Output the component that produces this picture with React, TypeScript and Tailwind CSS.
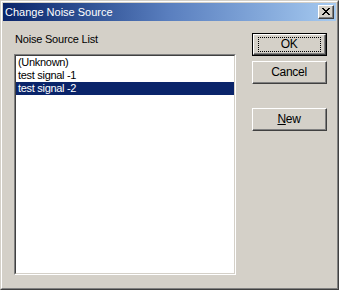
const font = { fontFamily: '"Liberation Sans", Arial, sans-serif' }

function Button({
  children,
  isDefault = false,
}: {
  children: React.ReactNode
  isDefault?: boolean
}) {
  const face = (
    <div className="flex h-full w-full border-t border-l border-t-white border-l-white border-r border-b border-r-[#404040] border-b-[#404040]">
      <div className="flex h-full w-full items-center justify-center border-r border-b border-r-[#808080] border-b-[#808080]">
        {isDefault ? (
          <div className="flex h-[15px] w-[63px] items-center justify-center border border-dotted border-black">
            {children}
          </div>
        ) : (
          children
        )}
      </div>
    </div>
  )
  return (
    <div
      className={
        isDefault
          ? 'h-[23px] w-[75px] border border-black text-[12px] tracking-[-0.3px] text-black'
          : 'h-[23px] w-[75px] text-[12px] tracking-[-0.3px] text-black'
      }
    >
      {face}
    </div>
  )
}

export default function App() {
  const items = ['(Unknown)', 'test signal -1', 'test signal -2']
  const selected = 2

  return (
    <div
      className="h-[290px] w-[339px] overflow-hidden border-t border-l border-t-[#d4d0c8] border-l-[#d4d0c8] border-r border-b border-r-[#404040] border-b-[#404040] bg-[#d4d0c8]"
      style={font}
    >
      <div className="flex h-full w-full flex-col border-t border-l border-t-white border-l-white border-r border-b border-r-[#808080] border-b-[#808080] p-px">
        {/* title bar */}
        <div className="flex h-[18px] items-center justify-between bg-gradient-to-r from-[#0a246a] via-[#5a7fbf] to-[#a6caf0] pl-[2px] pr-[2px]">
          <span className="text-[11px] leading-none text-white">Change Noise Source</span>
          <div className="h-[14px] w-[16px] border-t border-l border-t-white border-l-white border-r border-b border-r-[#404040] border-b-[#404040] bg-[#d4d0c8]">
            <div className="flex h-full w-full items-center justify-center border-r border-b border-r-[#808080] border-b-[#808080]">
              <svg width="8" height="7" viewBox="0 0 8 7" shapeRendering="crispEdges">
                <path
                  d="M0 0h2v1H0zM6 0h2v1H6zM1 1h2v1H1zM5 1h2v1H5zM2 2h4v1H2zM3 3h2v1H3zM2 4h4v1H2zM1 5h2v1H1zM5 5h2v1H5zM0 6h2v1H0zM6 6h2v1H6z"
                  fill="#000"
                />
              </svg>
            </div>
          </div>
        </div>

        {/* body */}
        <div className="flex flex-1 pl-[11px] pt-[10px]">
          <div className="flex w-[222px] flex-col">
            <div className="pl-px pt-[2px] text-[11px] leading-[13px] tracking-[-0.2px] text-black">
              Noise Source List
            </div>
            <div className="mt-[8px] h-[221px] border-t border-l border-t-[#808080] border-l-[#808080] border-r border-b border-r-white border-b-white">
              <div className="h-full w-full border-t border-l border-t-[#404040] border-l-[#404040] border-r border-b border-r-[#d4d0c8] border-b-[#d4d0c8] bg-white">
                {items.map((item, i) => (
                  <div
                    key={item}
                    className={
                      i === selected
                        ? 'h-[13px] bg-[#0a246a] pl-[2px] text-[11px] leading-[13px] tracking-[-0.3px] text-white'
                        : 'h-[13px] pl-[2px] text-[11px] leading-[13px] tracking-[-0.3px] text-black'
                    }
                  >
                    {item}
                  </div>
                ))}
              </div>
            </div>
          </div>

          <div className="ml-[16px] mt-[2px] flex flex-col">
            <Button isDefault>OK</Button>
            <div className="mt-[5px]">
              <Button>Cancel</Button>
            </div>
            <div className="mt-[24px]">
              <Button>
                <span>
                  <span className="underline">N</span>ew
                </span>
              </Button>
            </div>
          </div>
        </div>
      </div>
    </div>
  )
}
